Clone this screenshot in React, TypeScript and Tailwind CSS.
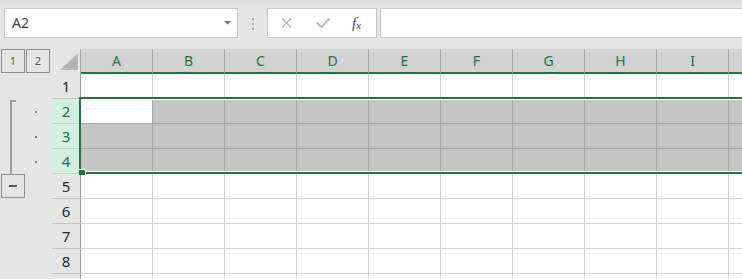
import React from "react";

const COLS = ["A", "B", "C", "D", "E", "F", "G", "H", "I", ""];
const ROWS = [1, 2, 3, 4, 5, 6, 7, 8, 9];
const SEL = [2, 3, 4];

function TopBar() {
  return (
    <div className="h-[49px] flex items-start pt-[8px] bg-[linear-gradient(#d9d9d9,#e6e6e6_6px)]">
      <div className="ml-[4px] w-[234px] h-[30px] shrink-0 border border-[#c6c6c6] bg-[#fefefe] flex items-center justify-between pl-[7px] pr-[6px]">
        <span className="text-[14px] text-[#444] leading-none">A2</span>
        <svg width="7" height="4" viewBox="0 0 7 4">
          <path d="M0 0H7L3.5 3.5Z" fill="#6f6f6f" />
        </svg>
      </div>
      <div className="ml-[14px] mt-[10px] flex flex-col gap-[3px] shrink-0">
        <div className="w-[2px] h-[2px] bg-[#a5a5a5]" />
        <div className="w-[2px] h-[2px] bg-[#a5a5a5]" />
        <div className="w-[2px] h-[2px] bg-[#a5a5a5]" />
      </div>
      <div className="ml-[13px] w-[110px] h-[30px] shrink-0 border border-[#c6c6c6] bg-[#fefefe] flex items-center">
        <svg className="ml-[13px]" width="11" height="10" viewBox="0 0 11 10">
          <path d="M1 0.5L10 9.5M10 0.5L1 9.5" stroke="#b2b2b2" strokeWidth="1.3" fill="none" />
        </svg>
        <svg className="ml-[24px]" width="14" height="10" viewBox="0 0 14 10">
          <path d="M0.8 4.5L5.5 9L13.3 0.7" stroke="#bababa" strokeWidth="2" fill="none" />
        </svg>
        <span className="ml-[22px] font-['Liberation_Serif',serif] italic text-[#4a4a4a] leading-none flex items-end">
          <span className="text-[15px]">f</span>
          <span className="text-[11px]">x</span>
        </span>
      </div>
      <div className="ml-[3px] w-[400px] h-[30px] shrink-0 border border-[#c6c6c6] bg-[#fefefe]" />
    </div>
  );
}

function Outline() {
  return (
    <div className="w-[52px] shrink-0 flex flex-col">
      <div className="h-[25px] flex items-start">
        <div className="ml-[1px] w-[24px] h-[24px] border border-[#8e8e8e] flex items-center justify-center text-[11px] text-[#555]">
          1
        </div>
        <div className="ml-[1px] w-[24px] h-[24px] border border-[#8e8e8e] flex items-center justify-center text-[11px] text-[#555]">
          2
        </div>
      </div>
      <div className="h-[25px]" />
      <div className="h-[75px] flex">
        <div className="ml-[10px] mt-[1px] w-[6px] h-[74px] border-l-2 border-t-2 border-[#a0a0a0]" />
        <div className="ml-[19px] flex flex-col">
          {SEL.map((r) => (
            <div key={r} className="h-[25px] flex items-center">
              <div className="w-[2px] h-[2px] bg-[#808080]" />
            </div>
          ))}
        </div>
      </div>
      <div className="ml-[1px] w-[24px] h-[24px] border border-[#8e8e8e] flex items-center justify-center">
        <div className="w-[8px] h-[2px] bg-[#555]" />
      </div>
    </div>
  );
}

function Grid() {
  return (
    <div className="relative shrink-0 flex flex-col">
      <div className="flex h-[25px]">
        <div className="w-[29px] h-[25px] shrink-0 border-r border-[#ababab] bg-[#e6e6e6] flex items-end justify-end">
          <svg width="28" height="25" viewBox="0 0 28 25">
            <path d="M8 21H26V4Z" fill="#b4b4b4" />
          </svg>
        </div>
        {COLS.map((c, i) => (
          <div
            key={i}
            className="w-[72px] h-[25px] shrink-0 bg-[#d2d2d2] border-r border-r-[#ababab] border-b-2 border-b-[#217346] flex items-center justify-center text-[14px] text-[#217346] leading-none"
          >
            {c}
          </div>
        ))}
      </div>
      {ROWS.map((r) => {
        const sel = SEL.includes(r);
        return (
          <div key={r} className="flex h-[25px]">
            <div
              className={
                sel
                  ? "w-[29px] h-[25px] shrink-0 bg-[#d3f0e0] border-r border-r-[#9e9e9e] border-b border-b-[#bcd9c7] flex items-center justify-center text-[15px] text-[#217346] leading-none"
                  : "w-[29px] h-[25px] shrink-0 bg-[#e6e6e6] border-r border-r-[#9e9e9e] border-b border-b-[#c6c6c6] flex items-center justify-center text-[15px] text-[#262626] leading-none"
              }
            >
              {r < 9 ? r : ""}
            </div>
            {COLS.map((c, i) => {
              const active = r === 2 && i === 0;
              const cls = active
                ? "w-[72px] h-[25px] shrink-0 bg-white border-r border-b border-[#a6a6a6]"
                : sel
                ? "w-[72px] h-[25px] shrink-0 bg-[#c6c6c6] border-r border-b border-[#a6a6a6]"
                : "w-[72px] h-[25px] shrink-0 bg-white border-r border-b border-[#d4d4d4]";
              return <div key={i} className={cls} />;
            })}
          </div>
        );
      })}
      <div className="absolute left-[27px] top-[48px] w-[800px] h-[77px] border-2 border-[#217346] flex flex-col justify-between">
        <div className="h-px bg-white" />
        <div className="h-px bg-white" />
      </div>
      <div className="absolute left-[27px] top-[120px] w-[7px] h-[6px] bg-[#217346] border-t border-r border-white" />
    </div>
  );
}

export default function App() {
  return (
    <div className="w-[742px] h-[279px] overflow-hidden bg-[#e6e6e6] font-['Noto_Sans',sans-serif]">
      <TopBar />
      <div className="flex">
        <Outline />
        <Grid />
      </div>
    </div>
  );
}
